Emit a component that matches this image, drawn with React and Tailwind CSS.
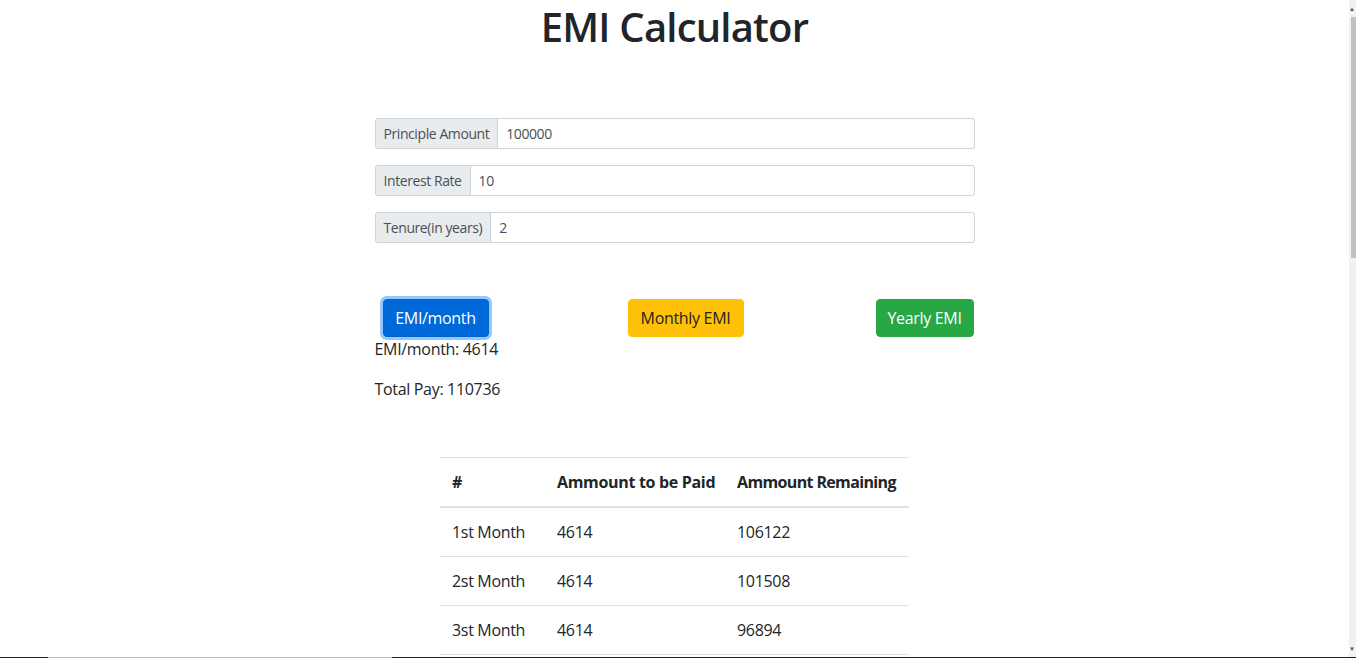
import React from "react";

const font = { fontFamily: '"Segoe UI", "Open Sans", "Noto Sans", sans-serif' };

function InputRow({ label, value }) {
  return (
    <div className="flex h-[31px] w-full mb-4 text-[14px] tracking-[-0.03em]">
      <div className="flex items-center px-2 bg-[#e9ecef] text-[#495057] border border-[#ced4da] rounded-l-[3px] whitespace-nowrap">
        {label}
      </div>
      <div className="flex-1 flex items-center px-2 bg-white text-[#495057] border border-l-0 border-[#ced4da] rounded-r-[3px]">
        {value}
      </div>
    </div>
  );
}

export default function App() {
  const rows = [
    ["1st Month", "4614", "106122"],
    ["2st Month", "4614", "101508"],
    ["3st Month", "4614", "96894"],
  ];
  return (
    <div className="h-[658px] overflow-hidden flex flex-col bg-white" style={font}>
      <div className="flex flex-1 min-h-0">
        <div className="flex-1 min-w-0 overflow-hidden text-[#212529] text-[16px] leading-[24px] tracking-[-0.02em]">
          <h1 className="text-center text-[40px] leading-[48px] font-semibold mt-[3px] tracking-[-0.02em]">EMI Calculator</h1>
          <div className="w-[600px] mx-auto mt-[67px]">
            <InputRow label="Principle Amount" value="100000" />
            <InputRow label="Interest Rate" value="10" />
            <InputRow label="Tenure(in years)" value="2" />
            <div className="flex items-center mt-[56px]">
              <button className="ml-2 h-[38px] w-[106px] rounded-[4px] bg-[#0069d9] border border-[#0062cc] text-white shadow-[0_0_0_3px_rgba(38,143,255,0.5)] whitespace-nowrap">
                EMI/month
              </button>
              <button className="ml-[139px] h-[38px] w-[116px] rounded-[4px] bg-[#ffc107] border border-[#ffc107] text-[#212529] whitespace-nowrap">
                Monthly EMI
              </button>
              <button className="ml-auto mr-px h-[38px] w-[98px] rounded-[4px] bg-[#28a745] border border-[#28a745] text-white whitespace-nowrap">
                Yearly EMI
              </button>
            </div>
            <p className="mb-4">EMI/month: 4614</p>
            <p className="mb-4">Total Pay: 110736</p>
          </div>
          <div className="flex justify-center mt-[56px]">
            <table className="border-collapse table-fixed w-[469px]">
              <thead>
                <tr className="border-t border-[#dee2e6] border-b-2">
                  <th className="text-left font-bold p-3 w-[105px] whitespace-nowrap">#</th>
                  <th className="text-left font-bold p-3 w-[180px] whitespace-nowrap">Ammount to be Paid</th>
                  <th className="text-left font-bold p-3 w-[184px] whitespace-nowrap tracking-[-0.04em]">Ammount Remaining</th>
                </tr>
              </thead>
              <tbody>
                {rows.map((r) => (
                  <tr key={r[0]} className="border-t border-b border-[#dee2e6]">
                    <td className="p-3 whitespace-nowrap">{r[0]}</td>
                    <td className="p-3">{r[1]}</td>
                    <td className="p-3">{r[2]}</td>
                  </tr>
                ))}
              </tbody>
            </table>
          </div>
        </div>
        <div className="w-[7px] bg-[#f1f1f1] flex flex-col">
          <div className="h-[17px] flex items-center justify-end pr-[1px] text-[6px] text-[#505050] leading-none">▲</div>
          <div className="h-[241px] ml-[2px] bg-[#c1c1c1]"></div>
          <div className="flex-1"></div>
          <div className="h-[17px] flex items-center justify-end pr-[1px] text-[6px] text-[#505050] leading-none">▼</div>
        </div>
      </div>
      <div className="h-px flex">
        <div className="w-[48px] bg-[#202124]"></div>
        <div className="w-[344px] bg-[#bdbdbd]"></div>
        <div className="flex-1 bg-[#202124]"></div>
      </div>
    </div>
  );
}
